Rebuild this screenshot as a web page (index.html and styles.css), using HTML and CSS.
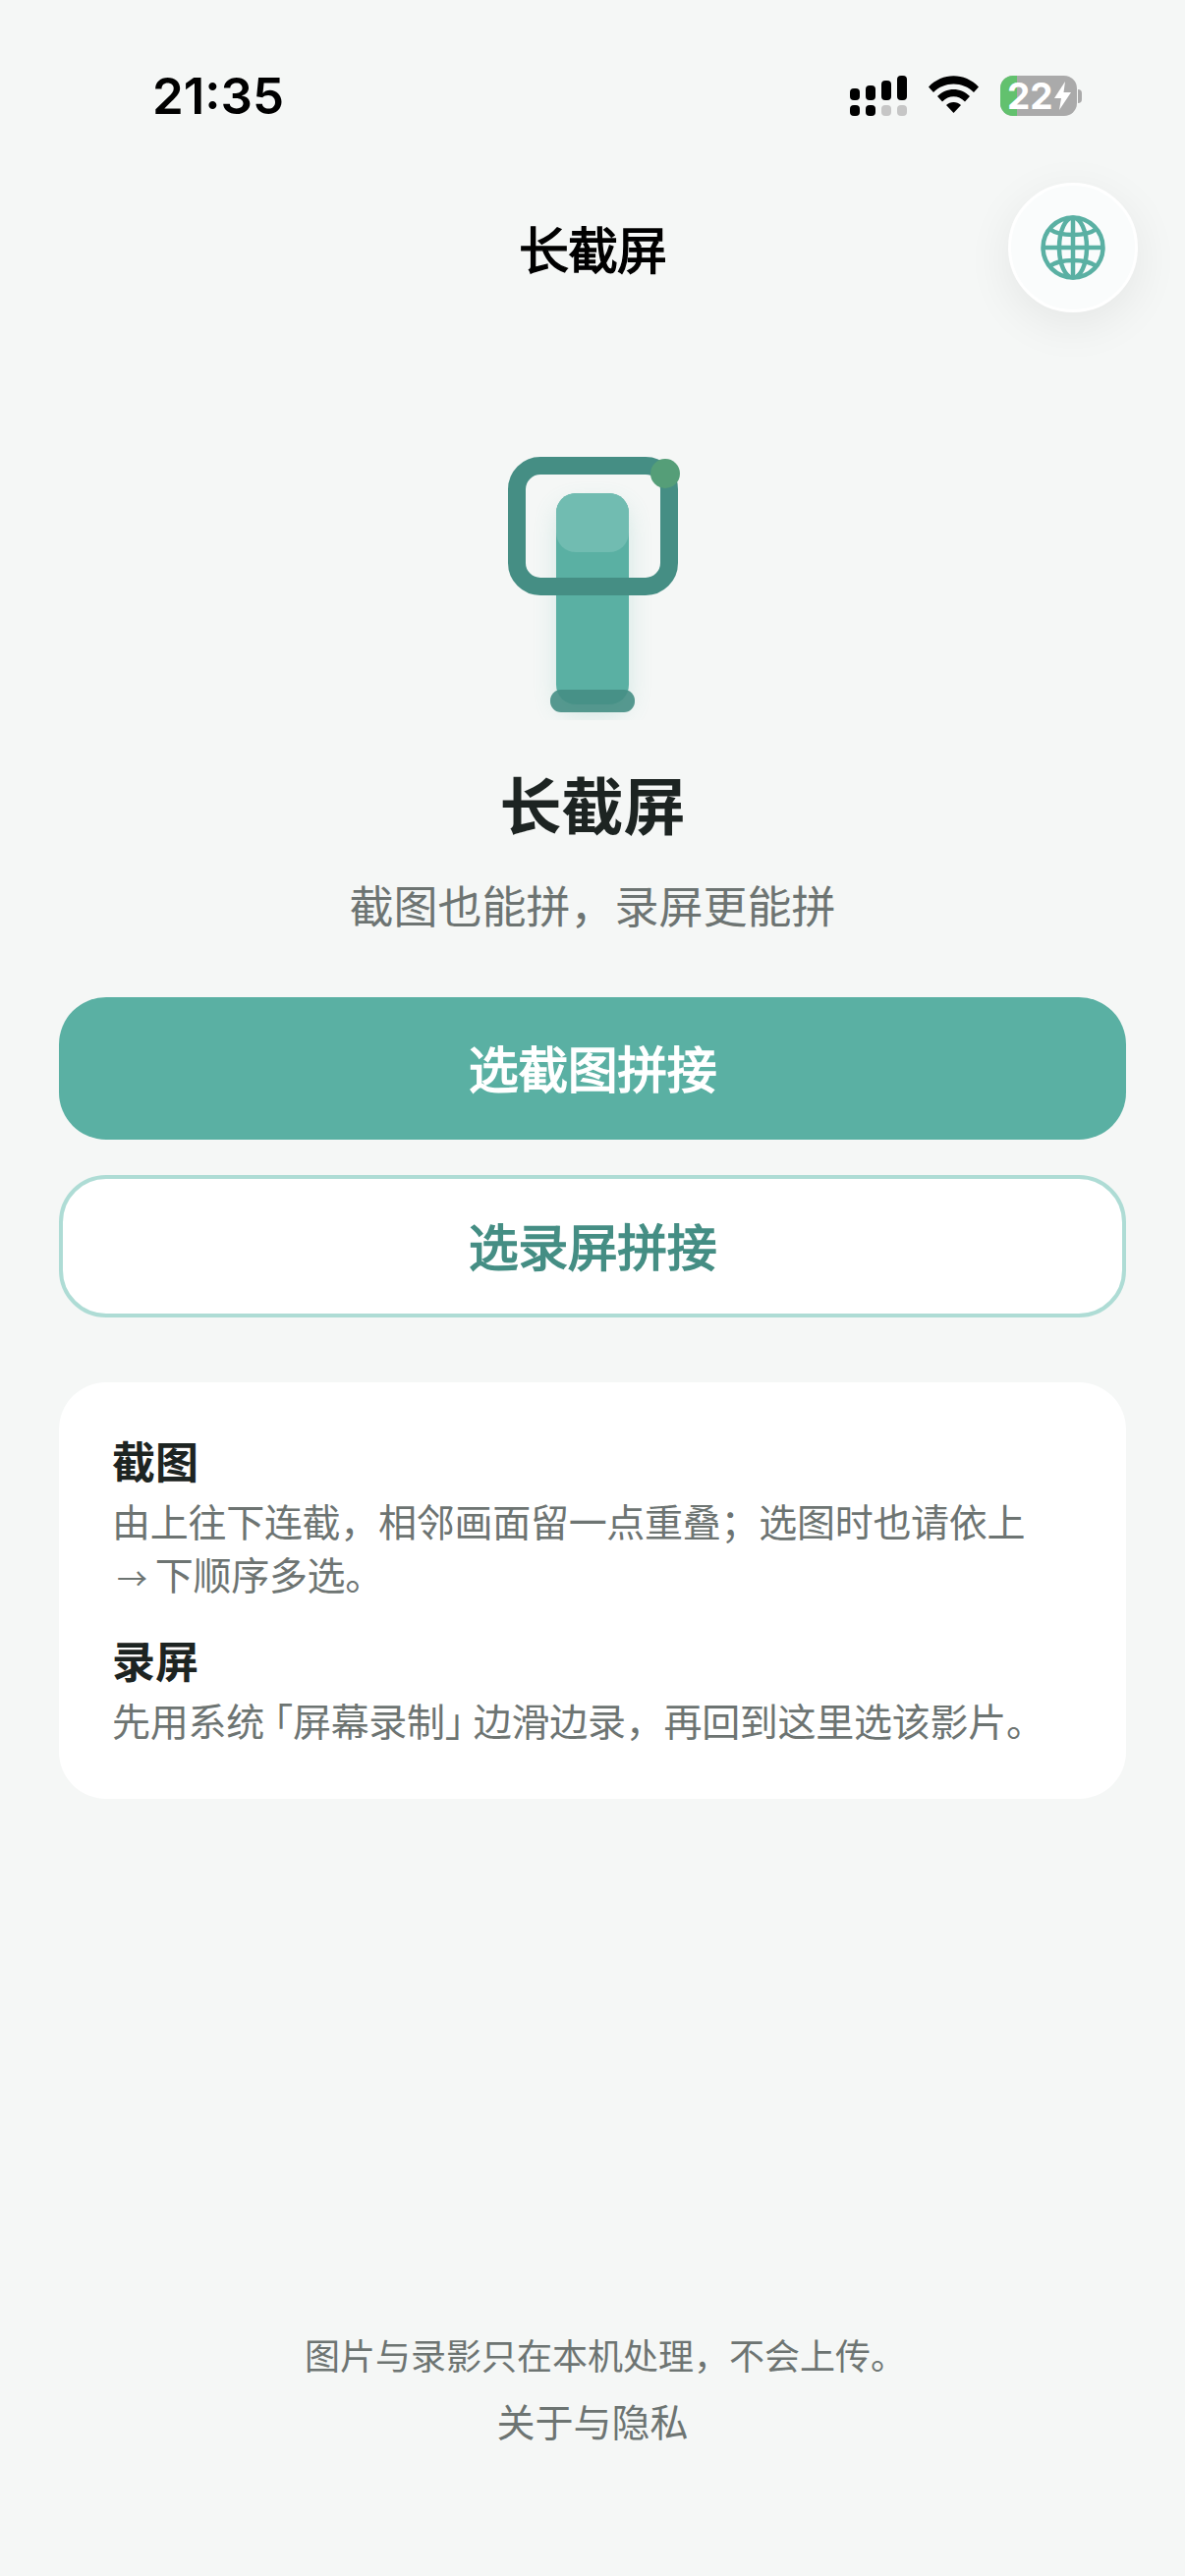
FILE: index.html
```html
<!DOCTYPE html>
<html lang="zh-CN">
<head>
    <meta charset="UTF-8">
    <meta name="viewport" content="width=device-width, initial-scale=1.0">
    <title>长截屏</title>
    <link rel="stylesheet" href="styles.css">
</head>
<body>
    <div class="page">
        <div class="status-bar">
            <div class="time">21:35</div>
            <div class="status-icons">
                <svg class="signal" width="58" height="41" viewBox="0 0 58 41">
                    <rect x="0" y="13" width="10" height="12" rx="4" fill="#000"/>
                    <rect x="16" y="10" width="10" height="15" rx="4" fill="#000"/>
                    <rect x="32" y="5" width="10" height="20" rx="4" fill="#000"/>
                    <rect x="48" y="0" width="10" height="25" rx="4" fill="#000"/>
                    <rect x="0" y="30" width="10" height="11" rx="4" fill="#000"/>
                    <rect x="16" y="30" width="10" height="11" rx="4" fill="#000"/>
                    <rect x="32" y="30" width="10" height="11" rx="4" fill="#c6c6c6"/>
                    <rect x="48" y="30" width="10" height="11" rx="4" fill="#c6c6c6"/>
                </svg>
                <svg class="wifi" width="51" height="38" viewBox="0 0 51 38">
                    <path d="M0 11.5 C14 -3.5 37 -3.5 51 11.5 L46 17 C35 5.5 16 5.5 5 17 Z" fill="#000"/>
                    <path d="M9 21 C18 11.5 33 11.5 42 21 L37 26.5 C30.500 19.500 20.500 19.500 14 26.500 Z" fill="#000"/>
                    <path d="M18 30 C22 26 29 26 33 30 L25.500 38 Z" fill="#000"/>
                </svg>
                <div class="battery">
                    <div class="battery-body">
                        <div class="battery-level"></div>
                        <div class="battery-text">22<svg class="bolt" width="17" height="29" viewBox="0 0 17 29"><path d="M11 0 L0 17 H7 L5 29 L17 11 H9.500 Z" fill="#fff"/></svg></div>
                    </div>
                    <div class="battery-tip"></div>
                </div>
            </div>
        </div>

        <div class="nav">
            <div class="nav-title">长截屏</div>
            <button class="lang-btn">
                <svg width="66" height="66" viewBox="0 0 66 66" fill="none" stroke="#5ab0a3" stroke-width="4.500">
                    <circle cx="33" cy="33" r="30.500"/>
                    <ellipse cx="33" cy="33" rx="14" ry="30.500"/>
                    <path d="M33 2.500 V63.500 M2.500 33 H63.500"/>
                    <path d="M9 14 C20 22 46 22 57 14 M9 52 C20 44 46 44 57 52"/>
                </svg>
            </button>
        </div>

        <div class="hero">
            <svg class="hero-art" width="180" height="270" viewBox="0 0 180 270">
                <defs>
                    <filter id="soft" x="-60%" y="-30%" width="220%" height="160%">
                        <feGaussianBlur stdDeviation="12"/>
                    </filter>
                </defs>
                <rect x="53" y="50" width="74" height="215" rx="20" fill="#5ab0a3" opacity="0.22" filter="url(#soft)"/>
                <rect x="53" y="39" width="74" height="215" rx="20" fill="#5ab0a3"/>
                <rect x="53" y="39" width="74" height="60" rx="20" fill="#71bcb1"/>
                <rect x="47" y="239" width="86" height="23" rx="11" fill="#458e84" opacity="0.9"/>
                <rect x="13" y="11" width="155" height="123" rx="24" fill="none" stroke="#458e84" stroke-width="18"/>
                <circle cx="164" cy="19" r="15" fill="#559e78"/>
            </svg>
            <h1 class="hero-title">长截屏</h1>
            <p class="hero-sub">截图也能拼，录屏更能拼</p>
        </div>

        <div class="actions">
            <button class="btn btn-primary">选截图拼接</button>
            <button class="btn btn-outline">选录屏拼接</button>
        </div>

        <div class="help-card">
            <h3>截图</h3>
            <p>由上往下连截，相邻画面留一点重叠；选图时也请依上<br><span class="arrow">→</span>下顺序多选。</p>
            <h3 class="help-second">录屏</h3>
            <p>先用系<span class="tight">统</span>「屏幕录制<span class="tight">」</span>边滑边录，再回到这里选该影片。</p>
        </div>

        <div class="footer">
            <p class="footer-note">图片与录影只在本机处理，不会上传。</p>
            <p class="footer-link">关于与隐私</p>
        </div>
    </div>
</body>
</html>
```

FILE: styles.css
```css
* {
    margin: 0;
    padding: 0;
    box-sizing: border-box;
    font-family: "Noto Sans CJK SC", "Noto Sans", sans-serif;
}

body {
    background-color: #f5f7f6;
}

.page {
    width: 1206px;
    height: 2622px;
    display: flex;
    flex-direction: column;
    padding: 0 60px;
}

.status-bar {
    display: flex;
    justify-content: space-between;
    align-items: flex-start;
    height: 194px;
    padding: 69px 45px 0 95px;
}

.time {
    font-family: Inter, "Liberation Sans", sans-serif;
    font-size: 51px;
    line-height: 58px;
    font-weight: 600;
    color: #000;
}

.status-icons {
    display: flex;
    align-items: flex-start;
    padding-top: 8px;
    gap: 22px;
}

.battery {
    display: flex;
    align-items: center;
}

.battery-body {
    position: relative;
    width: 78px;
    height: 41px;
    background: #aaa;
    border-radius: 13px;
}

.battery-level {
    width: 17px;
    height: 100%;
    background: #62c16e;
    border-radius: 13px 0 0 13px;
}

.battery-text {
    position: absolute;
    top: 0;
    left: 7px;
    display: flex;
    align-items: center;
    height: 41px;
    font-family: Inter, "Liberation Sans", sans-serif;
    font-size: 37px;
    line-height: 41px;
    font-weight: 700;
    color: #fff;
}

.bolt {
    margin-left: 1px;
}

.battery-tip {
    width: 4px;
    height: 14px;
    margin-left: 1px;
    background: #aaa;
    border-radius: 0 4px 4px 0;
}

.nav {
    position: relative;
    height: 118px;
    display: flex;
    justify-content: center;
    align-items: center;
}

.nav-title {
    padding-bottom: 3px;
    font-size: 51px;
    font-weight: 400;
    letter-spacing: -1px;
    color: #000;
    -webkit-text-stroke: 1.4px #000;
}

.lang-btn {
    position: absolute;
    top: -8px;
    right: -12px;
    width: 132px;
    height: 132px;
    display: flex;
    justify-content: center;
    align-items: center;
    background: #fafcfc;
    border: 3px solid #fff;
    border-radius: 50%;
    box-shadow: 0 12px 48px rgba(0,0,0,0.07);
}

.hero {
    display: flex;
    flex-direction: column;
    align-items: center;
    margin-top: 151px;
}

.hero-art {
    display: block;
}

.hero-title {
    margin-top: 42px;
    font-size: 63px;
    line-height: 84px;
    font-weight: 700;
    color: #1d2422;
}

.hero-sub {
    margin-top: 32px;
    font-size: 45px;
    line-height: 60px;
    color: #6d7472;
}

.actions {
    display: flex;
    flex-direction: column;
    gap: 36px;
    margin-top: 64px;
}

.btn {
    width: 100%;
    height: 145px;
    padding-bottom: 3px;
    border-radius: 48px;
    font-size: 51px;
    font-weight: 400;
    letter-spacing: -0.5px;
}

.btn-primary {
    background: #5ab0a3;
    border: none;
    color: #fff;
    -webkit-text-stroke: 1.5px #fff;
}

.btn-outline {
    background: #fff;
    border: 4px solid #aedcd5;
    color: #458e84;
    -webkit-text-stroke: 1.5px #458e84;
}

.help-card {
    margin-top: 66px;
    padding: 52px 54px;
    height: 424px;
    background: #fff;
    border-radius: 48px;
}

.help-card h3 {
    font-size: 44px;
    line-height: 54px;
    font-weight: 700;
    color: #1d2422;
}

.help-card p {
    margin-top: 7px;
    font-size: 39px;
    line-height: 54px;
    letter-spacing: -0.28px;
    color: #6d7472;
}

.help-card .help-second {
    margin-top: 30px;
}

.arrow {
    margin: 0 8px 0 5px;
    font-size: 31px;
}

.tight {
    letter-spacing: -10px;
}

.footer {
    margin-top: auto;
    padding-bottom: 135px;
    text-align: center;
    color: #6d7472;
}

.footer-note {
    padding-left: 26px;
    font-size: 36px;
    line-height: 48px;
}

.footer-link {
    margin-top: 19px;
    font-size: 39px;
    line-height: 48px;
}
```
